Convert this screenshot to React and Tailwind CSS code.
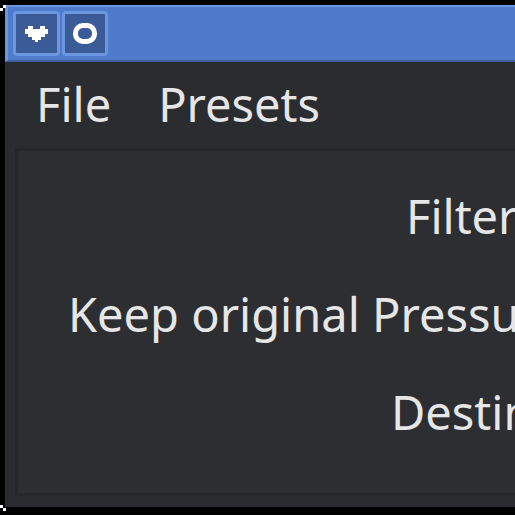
export default function App() {
  const font = { fontFamily: '"Noto Sans", "Open Sans", sans-serif' };
  return (
    <div className="relative w-[515px] h-[515px] overflow-hidden bg-black" style={font}>
      {/* corner pixels */}
      <div className="absolute left-0 top-[8px] w-[3px] h-[3px] bg-white" />
      <div className="absolute left-[3px] top-[5px] w-[3px] h-[3px] bg-white" />
      <div className="absolute left-0 top-[505px] w-[3px] h-[3px] bg-white" />
      <div className="absolute left-[3px] top-[508px] w-[3px] h-[3px] bg-white" />
      <div className="ml-[5px] mt-[5px] w-[520px] h-[502px] flex flex-col">
        <div className="h-[57px] bg-[#4e7bcb] border-t-[2px] border-l-[3px] border-[#6b95dd] border-b-[2px] border-b-[#3f5f9a] flex items-center gap-[2px] pl-[5px]">
          <div className="w-[47px] h-[45px] rounded-[4px] bg-[#3b5b98] border-[3px] border-[#6c96de] flex items-center justify-center">
            <svg width="23" height="17" viewBox="0 0 23 17">
              <path d="M0 4h3V1h5v3h7V1h5v3h3v5h-3v3h-4v3h-3v2h-3v-2H7v-3H3V9H0z" fill="#fff" />
            </svg>
          </div>
          <div className="w-[46px] h-[45px] rounded-[4px] bg-[#3b5b98] border-[3px] border-[#6c96de] flex items-center justify-center">
            <div className="w-[24px] h-[21px] rounded-[10px] border-[5px] border-white" />
          </div>
        </div>
        <div className="flex-1 bg-[#2a2c30] flex flex-col">
          <div className="h-[86px] flex items-center pl-[31px] gap-[47px] text-[47px] text-[#e6e6e6] leading-none pb-[2px]">
            <span>File</span>
            <span>Presets</span>
          </div>
          <div className="ml-[10px] h-[348px] bg-[#2c2e32] border-t-[3px] border-l-[3px] border-b-[3px] border-[#25272a] flex flex-col text-[47px] text-[#e6e6e6] leading-none whitespace-nowrap overflow-hidden pt-[42px] gap-[51px]">
            <div className="h-[47px] pl-[388px]">Filter</div>
            <div className="h-[47px] pl-[50px]">Keep original Pressure</div>
            <div className="h-[47px] pl-[373px]">Destination</div>
          </div>
        </div>
      </div>
    </div>
  );
}
